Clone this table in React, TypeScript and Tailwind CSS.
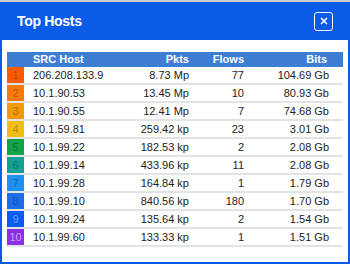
import React from 'react';
import { X } from 'lucide-react';

type HostRow = {
  host: string;
  pkts: string;
  flows: number;
  bits: string;
  bg: string;
  fg: string;
};

const rows: HostRow[] = [
  { host: '206.208.133.9', pkts: '8.73 Mp', flows: 77, bits: '104.69 Gb', bg: 'bg-[#fa5a00]', fg: 'text-[#b94500]' },
  { host: '10.1.90.53', pkts: '13.45 Mp', flows: 10, bits: '80.93 Gb', bg: 'bg-[#fb780a]', fg: 'text-[#bd5a08]' },
  { host: '10.1.90.55', pkts: '12.41 Mp', flows: 7, bits: '74.68 Gb', bg: 'bg-[#f2990c]', fg: 'text-[#b87308]' },
  { host: '10.1.59.81', pkts: '259.42 kp', flows: 23, bits: '3.01 Gb', bg: 'bg-[#f2bd14]', fg: 'text-[#b88e10]' },
  { host: '10.1.99.22', pkts: '182.53 kp', flows: 2, bits: '2.08 Gb', bg: 'bg-[#12a247]', fg: 'text-[#0b7a34]' },
  { host: '10.1.99.14', pkts: '433.96 kp', flows: 11, bits: '2.08 Gb', bg: 'bg-[#13a092]', fg: 'text-[#0c776c]' },
  { host: '10.1.99.28', pkts: '164.84 kp', flows: 1, bits: '1.79 Gb', bg: 'bg-[#1f8ff0]', fg: 'text-[#1769b4]' },
  { host: '10.1.99.10', pkts: '840.56 kp', flows: 180, bits: '1.70 Gb', bg: 'bg-[#1c6ee8]', fg: 'text-[#1554b4]' },
  { host: '10.1.99.24', pkts: '135.64 kp', flows: 2, bits: '1.54 Gb', bg: 'bg-[#0a5cf5]', fg: 'text-[#6f9cf7]' },
  { host: '10.1.99.60', pkts: '133.33 kp', flows: 1, bits: '1.51 Gb', bg: 'bg-[#8b2fe6]', fg: 'text-[#c79cf2]' },
];

const cols = 'grid grid-cols-[17px_95px_70px_55px_85px_14px]';

const App: React.FC = () => {
  return (
    <div className="w-[350px] h-[264px] flex flex-col bg-white font-['Liberation_Sans',Arial,sans-serif] overflow-hidden">
      <div className="h-[2px] shrink-0 bg-[#c9cdd3]" />
      <div className="flex-1 flex flex-col border-2 border-t-0 border-[#0a5ce8]">
        <div className="h-[38px] shrink-0 bg-[#0a5ce8] flex items-center justify-between pl-[15px] pr-[15px]">
          <h1 className="text-white font-bold text-[14px] tracking-[-0.3px]">Top Hosts</h1>
          <button className="w-[19px] h-[19px] border-[1.5px] border-white rounded-[3px] flex items-center justify-center text-white">
            <X size={10} strokeWidth={4} />
          </button>
        </div>

        <div className="px-[5px] pt-[12px] text-[11px] leading-none">
          <div className={`${cols} h-[15px] items-center bg-[#3d7ed2] text-white font-bold`}>
            <div />
            <div className="pl-[9px]">SRC Host</div>
            <div className="text-right">Pkts</div>
            <div className="text-right">Flows</div>
            <div className="text-right pr-[2px]">Bits</div>
            <div />
          </div>
          {rows.map((r, i) => (
            <div key={r.host} className={`${cols} h-[18px] border-b-2 border-[#e1e3e6] text-[#222]`}>
              <div className={`${r.bg} ${r.fg} flex items-center justify-center`}>{i + 1}</div>
              <div className="pl-[9px] flex items-center">{r.host}</div>
              <div className="flex items-center justify-end">{r.pkts}</div>
              <div className="flex items-center justify-end">{r.flows}</div>
              <div className="flex items-center justify-end">{r.bits}</div>
              <div />
            </div>
          ))}
        </div>
      </div>
    </div>
  );
};

export default App;
